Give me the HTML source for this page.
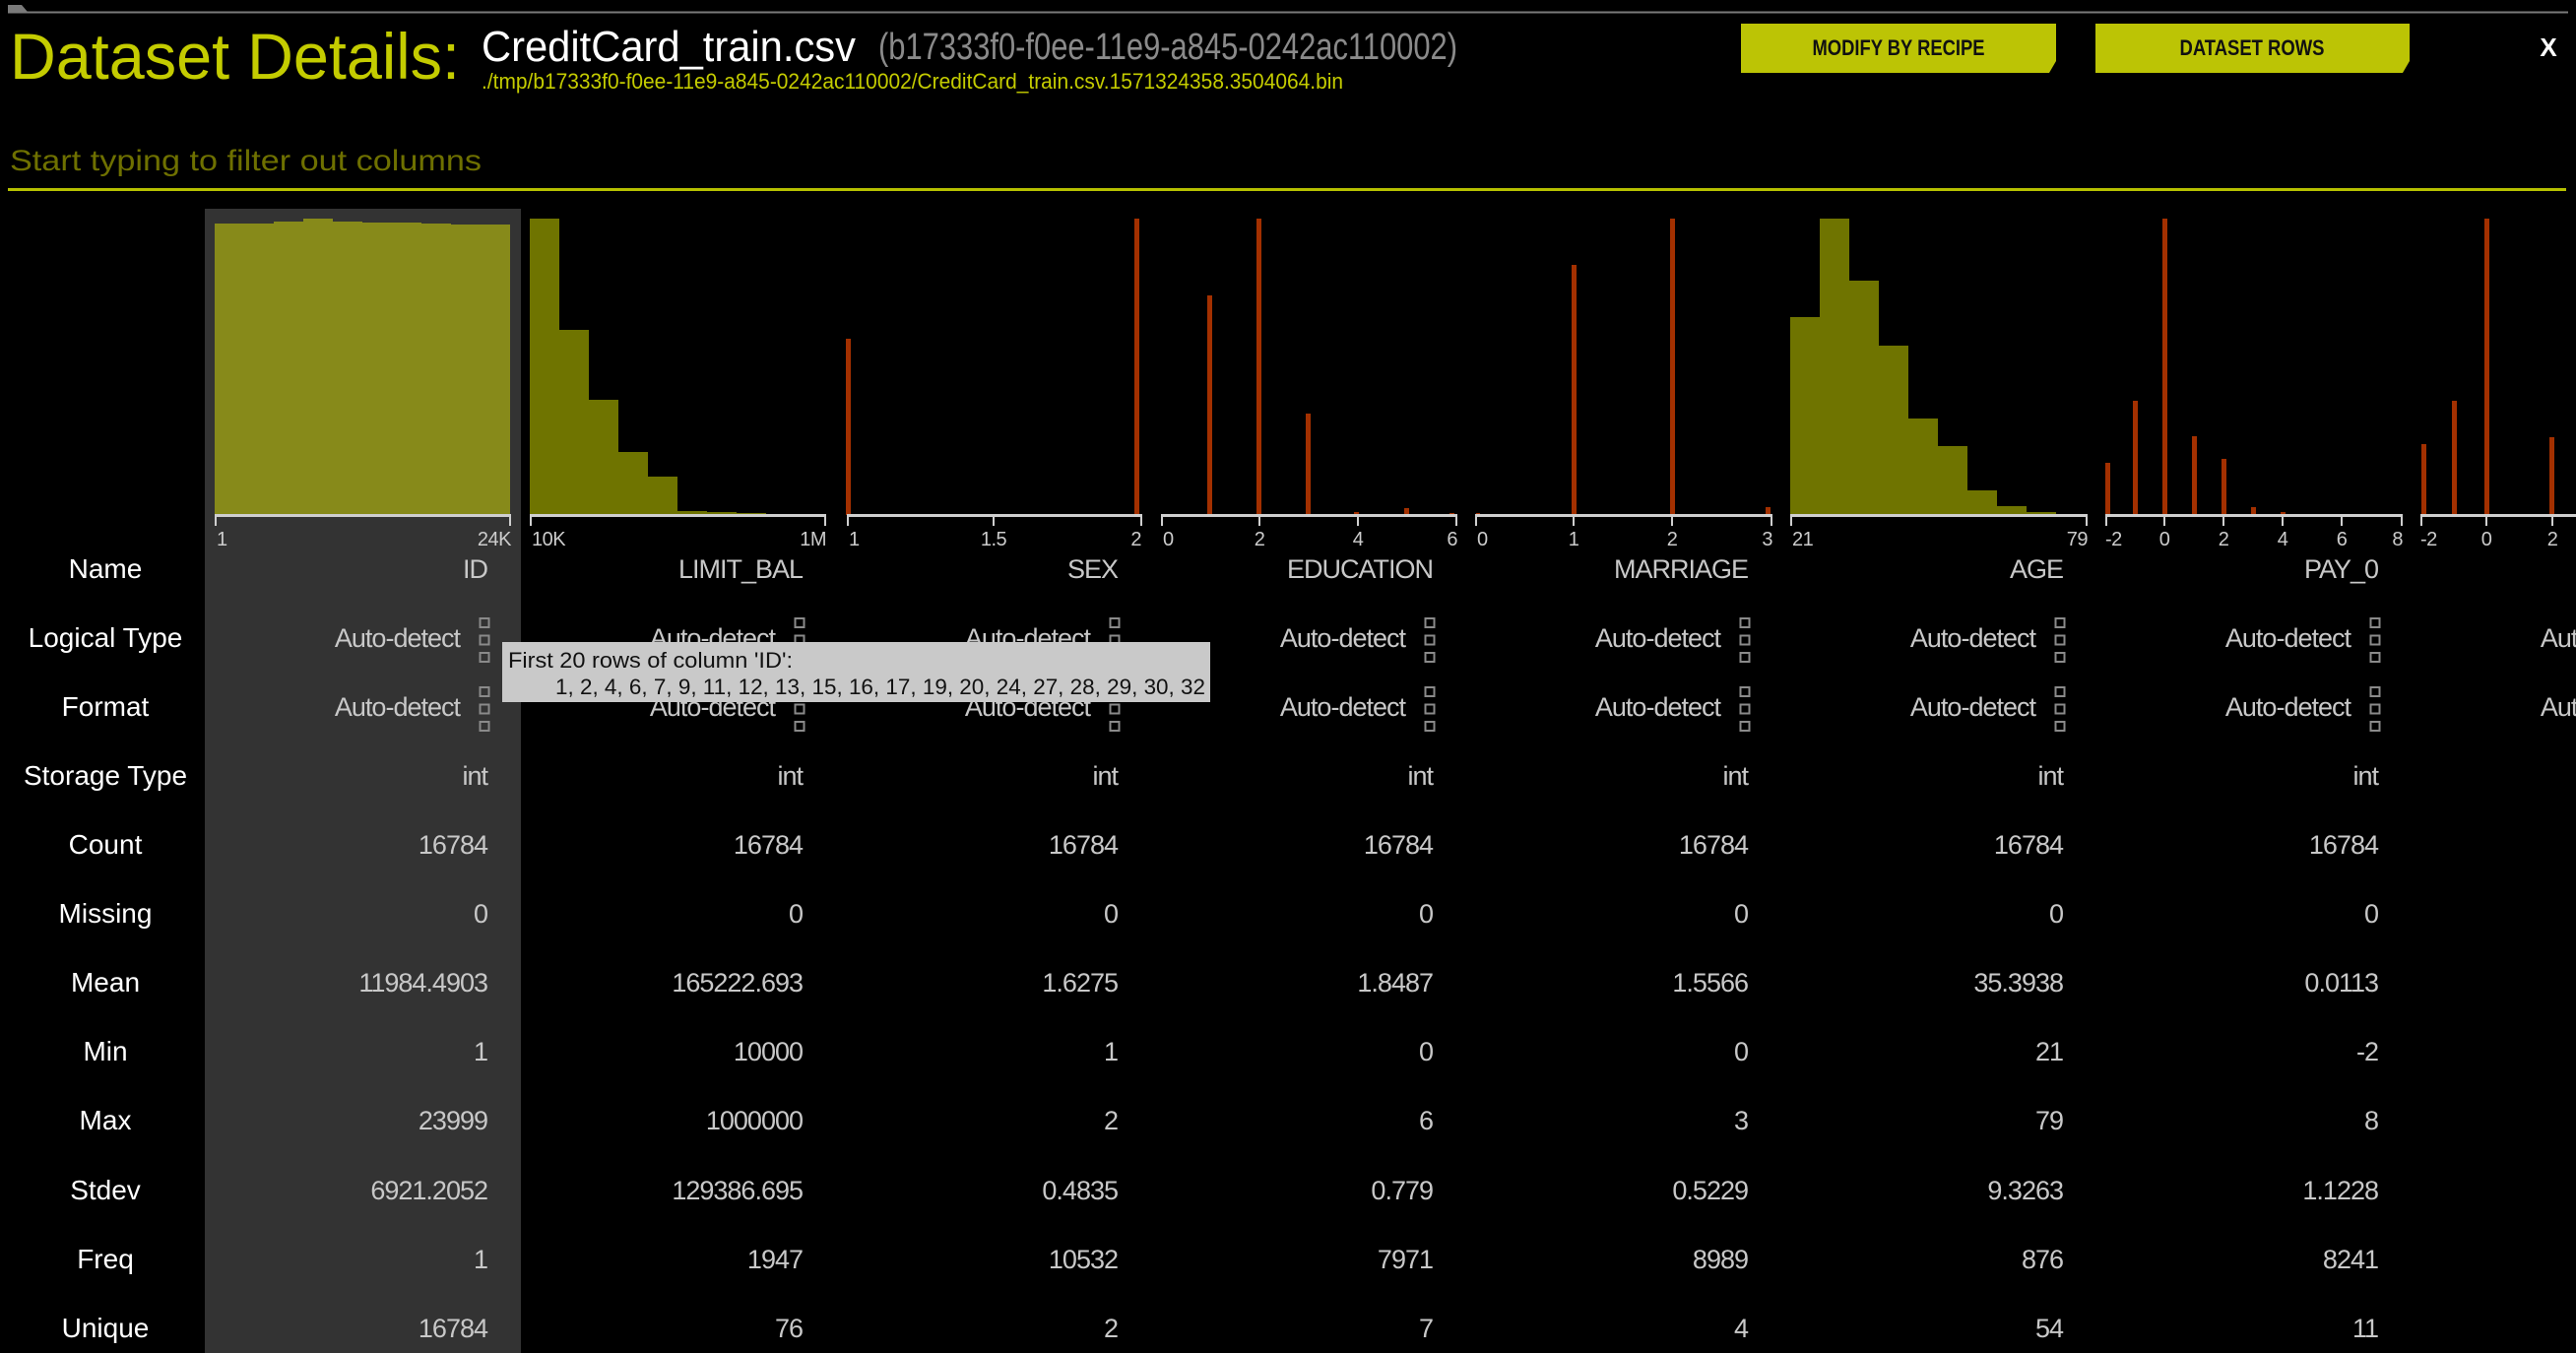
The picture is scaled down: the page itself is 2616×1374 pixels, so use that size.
<!DOCTYPE html>
<html><head><meta charset="utf-8"><style>
html,body{margin:0;padding:0;background:#000;overflow:hidden;width:2616px;height:1374px}
svg{display:block}
text{font-family:"Liberation Sans Narrow","Liberation Sans",sans-serif}
.lab{fill:#fff;font-size:28px;text-anchor:middle}
.val{fill:#c8c8c8;font-size:27px;text-anchor:end;letter-spacing:-1px}
.tk{fill:#ccc;font-size:20px;letter-spacing:-0.5px}
.ic{fill:none;stroke:#8a8a8a;stroke-width:2}
</style></head><body>
<svg width="2616" height="1374" viewBox="0 0 2616 1374" xmlns="http://www.w3.org/2000/svg">
<rect width="2616" height="1374" fill="#000"/>
<rect x="8" y="11.5" width="2600" height="2" fill="#7a7a7a"/>
<path d="M8 5 H22 L28 12 H8 Z" fill="#7a7a7a"/>
<text x="10" y="80" font-size="66" fill="#c4cc00" textLength="457" lengthAdjust="spacingAndGlyphs">Dataset Details:</text>
<text x="489" y="62" font-size="44" fill="#fff" textLength="380" lengthAdjust="spacingAndGlyphs">CreditCard_train.csv</text>
<text x="892" y="60" font-size="38" fill="#8a8a8a" textLength="588" lengthAdjust="spacingAndGlyphs">(b17333f0-f0ee-11e9-a845-0242ac110002)</text>
<text x="489" y="90" font-size="22" fill="#c4cc00" textLength="875" lengthAdjust="spacingAndGlyphs">./tmp/b17333f0-f0ee-11e9-a845-0242ac110002/CreditCard_train.csv.1571324358.3504064.bin</text>
<path d="M1768 24 H2088 V62 L2081 74 H1768 Z" fill="#bcc405"/>
<text x="1928" y="56" font-size="22" font-weight="bold" fill="#111" text-anchor="middle" textLength="175" lengthAdjust="spacingAndGlyphs">MODIFY BY RECIPE</text>
<path d="M2128 24 H2447 V62 L2440 74 H2128 Z" fill="#bcc405"/>
<text x="2287" y="56" font-size="22" font-weight="bold" fill="#111" text-anchor="middle" textLength="147" lengthAdjust="spacingAndGlyphs">DATASET ROWS</text>
<text x="2588" y="57" font-size="26" font-weight="bold" fill="#fff" text-anchor="middle">X</text>
<text x="10" y="173" font-size="30" fill="#6e7000" textLength="479" lengthAdjust="spacingAndGlyphs">Start typing to filter out columns</text>
<rect x="8" y="191" width="2598" height="3" fill="#b5c000"/>
<rect x="208" y="212" width="321" height="1162" fill="#333"/>

<g fill="#878a1a">
<rect x="218" y="227" width="30" height="296"/><rect x="248" y="227" width="30" height="296"/>
<rect x="278" y="225" width="30" height="298"/><rect x="308" y="222" width="30" height="301"/>
<rect x="338" y="225" width="30" height="298"/><rect x="368" y="226" width="30" height="297"/>
<rect x="398" y="226" width="30" height="297"/><rect x="428" y="227" width="30" height="296"/>
<rect x="458" y="228" width="30" height="295"/><rect x="488" y="228" width="30" height="295"/>
</g>
<g fill="#6f7400">
<rect x="538" y="222" width="30" height="301"/><rect x="568" y="335" width="30" height="188"/>
<rect x="598" y="406" width="30" height="117"/><rect x="628" y="459" width="30" height="64"/>
<rect x="658" y="484" width="30" height="39"/><rect x="688" y="519" width="30" height="4"/>
<rect x="718" y="520" width="30" height="3"/><rect x="748" y="521" width="30" height="2"/>
</g>
<g fill="#6f7400">
<rect x="1818" y="322" width="30" height="201"/><rect x="1848" y="222" width="30" height="301"/>
<rect x="1878" y="285" width="30" height="238"/><rect x="1908" y="351" width="30" height="172"/>
<rect x="1938" y="425" width="30" height="98"/><rect x="1968" y="453" width="30" height="70"/>
<rect x="1998" y="498" width="30" height="25"/><rect x="2028" y="514" width="30" height="9"/>
<rect x="2058" y="520" width="30" height="3"/>
</g>
<g fill="#a33000">
<rect x="859" y="344" width="5" height="179"/><rect x="1152" y="222" width="5" height="301"/>
<rect x="1226" y="300" width="5" height="223"/><rect x="1276" y="222" width="5" height="301"/>
<rect x="1326" y="420" width="5" height="103"/><rect x="1375" y="520" width="5" height="3"/>
<rect x="1426" y="516" width="5" height="7"/><rect x="1472" y="521" width="5" height="2"/>
<rect x="1499" y="521" width="4" height="2"/><rect x="1596" y="269" width="5" height="254"/>
<rect x="1696" y="222" width="5" height="301"/><rect x="1793" y="515" width="5" height="8"/>
<rect x="2138" y="470" width="5" height="53"/><rect x="2166" y="407" width="5" height="116"/>
<rect x="2196" y="222" width="5" height="301"/><rect x="2226" y="443" width="5" height="80"/>
<rect x="2256" y="466" width="5" height="57"/><rect x="2286" y="515" width="5" height="8"/>
<rect x="2316" y="520" width="5" height="3"/>
<rect x="2459" y="451" width="5" height="72"/><rect x="2490" y="407" width="5" height="116"/>
<rect x="2523" y="222" width="5" height="301"/><rect x="2589" y="444" width="5" height="79"/>
</g>
<g fill="#cfcfcf">
<rect x="218" y="522" width="301" height="3"/><rect x="218" y="522" width="2" height="12"/><rect x="517" y="522" width="2" height="12"/>
<rect x="538" y="522" width="301" height="3"/><rect x="538" y="522" width="2" height="12"/><rect x="837" y="522" width="2" height="12"/>
<rect x="860" y="522" width="300" height="3"/><rect x="860" y="522" width="2" height="12"/><rect x="1008" y="522" width="2" height="12"/><rect x="1158" y="522" width="2" height="12"/>
<rect x="1179" y="522" width="301" height="3"/><rect x="1179" y="522" width="2" height="12"/><rect x="1278" y="522" width="2" height="12"/><rect x="1378" y="522" width="2" height="12"/><rect x="1478" y="522" width="2" height="12"/>
<rect x="1498" y="522" width="302" height="3"/><rect x="1498" y="522" width="2" height="12"/><rect x="1597" y="522" width="2" height="12"/><rect x="1697" y="522" width="2" height="12"/><rect x="1798" y="522" width="2" height="12"/>
<rect x="1818" y="522" width="302" height="3"/><rect x="1818" y="522" width="2" height="12"/><rect x="2118" y="522" width="2" height="12"/>
<rect x="2138" y="522" width="302" height="3"/><rect x="2138" y="522" width="2" height="12"/><rect x="2197" y="522" width="2" height="12"/><rect x="2257" y="522" width="2" height="12"/><rect x="2317" y="522" width="2" height="12"/><rect x="2377" y="522" width="2" height="12"/><rect x="2438" y="522" width="2" height="12"/>
<rect x="2458" y="522" width="158" height="3"/><rect x="2458" y="522" width="2" height="12"/><rect x="2524" y="522" width="2" height="12"/><rect x="2591" y="522" width="2" height="12"/>
</g>
<g class="tk">
<text x="220" y="554">1</text><text x="519" y="554" text-anchor="end">24K</text>
<text x="540" y="554">10K</text><text x="839" y="554" text-anchor="end">1M</text>
<text x="862" y="554">1</text><text x="1009" y="554" text-anchor="middle">1.5</text><text x="1159" y="554" text-anchor="end">2</text>
<text x="1181" y="554">0</text><text x="1279" y="554" text-anchor="middle">2</text><text x="1379" y="554" text-anchor="middle">4</text><text x="1480" y="554" text-anchor="end">6</text>
<text x="1500" y="554">0</text><text x="1598" y="554" text-anchor="middle">1</text><text x="1698" y="554" text-anchor="middle">2</text><text x="1800" y="554" text-anchor="end">3</text>
<text x="1820" y="554">21</text><text x="2120" y="554" text-anchor="end">79</text>
<text x="2138" y="554">-2</text><text x="2198" y="554" text-anchor="middle">0</text><text x="2258" y="554" text-anchor="middle">2</text><text x="2318" y="554" text-anchor="middle">4</text><text x="2378" y="554" text-anchor="middle">6</text><text x="2440" y="554" text-anchor="end">8</text>
<text x="2458" y="554">-2</text><text x="2525" y="554" text-anchor="middle">0</text><text x="2592" y="554" text-anchor="middle">2</text>
</g>

<g class="lab">
<text x="107" y="587">Name</text><text x="107" y="657">Logical Type</text><text x="107" y="727">Format</text>
<text x="107" y="797">Storage Type</text><text x="107" y="867">Count</text><text x="107" y="937">Missing</text>
<text x="107" y="1007">Mean</text><text x="107" y="1077">Min</text><text x="107" y="1147">Max</text>
<text x="107" y="1218">Stdev</text><text x="107" y="1288">Freq</text><text x="107" y="1358">Unique</text>
</g>

<g class="val">
<text x="495" y="587">ID</text><text x="815" y="587">LIMIT_BAL</text><text x="1135" y="587">SEX</text>
<text x="1455" y="587">EDUCATION</text><text x="1775" y="587">MARRIAGE</text><text x="2095" y="587">AGE</text><text x="2415" y="587">PAY_0</text>
<text x="467" y="657">Auto-detect</text><text x="787" y="657">Auto-detect</text><text x="1107" y="657">Auto-detect</text><text x="1427" y="657">Auto-detect</text><text x="1747" y="657">Auto-detect</text><text x="2067" y="657">Auto-detect</text><text x="2387" y="657">Auto-detect</text><text x="2707" y="657">Auto-detect</text>
<text x="467" y="727">Auto-detect</text><text x="787" y="727">Auto-detect</text><text x="1107" y="727">Auto-detect</text><text x="1427" y="727">Auto-detect</text><text x="1747" y="727">Auto-detect</text><text x="2067" y="727">Auto-detect</text><text x="2387" y="727">Auto-detect</text><text x="2707" y="727">Auto-detect</text>
<text x="495" y="797">int</text><text x="815" y="797">int</text><text x="1135" y="797">int</text><text x="1455" y="797">int</text><text x="1775" y="797">int</text><text x="2095" y="797">int</text><text x="2415" y="797">int</text>
<text x="495" y="867">16784</text><text x="815" y="867">16784</text><text x="1135" y="867">16784</text><text x="1455" y="867">16784</text><text x="1775" y="867">16784</text><text x="2095" y="867">16784</text><text x="2415" y="867">16784</text>
<text x="495" y="937">0</text><text x="815" y="937">0</text><text x="1135" y="937">0</text><text x="1455" y="937">0</text><text x="1775" y="937">0</text><text x="2095" y="937">0</text><text x="2415" y="937">0</text>
<text x="495" y="1007">11984.4903</text><text x="815" y="1007">165222.693</text><text x="1135" y="1007">1.6275</text><text x="1455" y="1007">1.8487</text><text x="1775" y="1007">1.5566</text><text x="2095" y="1007">35.3938</text><text x="2415" y="1007">0.0113</text>
<text x="495" y="1077">1</text><text x="815" y="1077">10000</text><text x="1135" y="1077">1</text><text x="1455" y="1077">0</text><text x="1775" y="1077">0</text><text x="2095" y="1077">21</text><text x="2415" y="1077">-2</text>
<text x="495" y="1147">23999</text><text x="815" y="1147">1000000</text><text x="1135" y="1147">2</text><text x="1455" y="1147">6</text><text x="1775" y="1147">3</text><text x="2095" y="1147">79</text><text x="2415" y="1147">8</text>
<text x="495" y="1218">6921.2052</text><text x="815" y="1218">129386.695</text><text x="1135" y="1218">0.4835</text><text x="1455" y="1218">0.779</text><text x="1775" y="1218">0.5229</text><text x="2095" y="1218">9.3263</text><text x="2415" y="1218">1.1228</text>
<text x="495" y="1288">1</text><text x="815" y="1288">1947</text><text x="1135" y="1288">10532</text><text x="1455" y="1288">7971</text><text x="1775" y="1288">8989</text><text x="2095" y="1288">876</text><text x="2415" y="1288">8241</text>
<text x="495" y="1358">16784</text><text x="815" y="1358">76</text><text x="1135" y="1358">2</text><text x="1455" y="1358">7</text><text x="1775" y="1358">4</text><text x="2095" y="1358">54</text><text x="2415" y="1358">11</text>
</g>

<defs>
<g id="ic">
<rect class="ic" x="-4.5" y="-22" width="9" height="9"/>
<rect class="ic" x="-4.5" y="-4.5" width="9" height="9"/>
<rect class="ic" x="-4.5" y="13" width="9" height="9"/>
</g>
</defs>
<use href="#ic" x="492" y="650"/><use href="#ic" x="812" y="650"/><use href="#ic" x="1132" y="650"/><use href="#ic" x="1452" y="650"/><use href="#ic" x="1772" y="650"/><use href="#ic" x="2092" y="650"/><use href="#ic" x="2412" y="650"/>
<use href="#ic" x="492" y="720"/><use href="#ic" x="812" y="720"/><use href="#ic" x="1132" y="720"/><use href="#ic" x="1452" y="720"/><use href="#ic" x="1772" y="720"/><use href="#ic" x="2092" y="720"/><use href="#ic" x="2412" y="720"/>

<rect x="510" y="652" width="719" height="61" fill="#c9c9c9"/>
<text x="516" y="678" font-size="22" fill="#111" textLength="289" lengthAdjust="spacingAndGlyphs">First 20 rows of column 'ID':</text>
<text x="564" y="705" font-size="22" fill="#111" textLength="660" lengthAdjust="spacingAndGlyphs">1, 2, 4, 6, 7, 9, 11, 12, 13, 15, 16, 17, 19, 20, 24, 27, 28, 29, 30, 32</text>
</svg>
</body></html>
